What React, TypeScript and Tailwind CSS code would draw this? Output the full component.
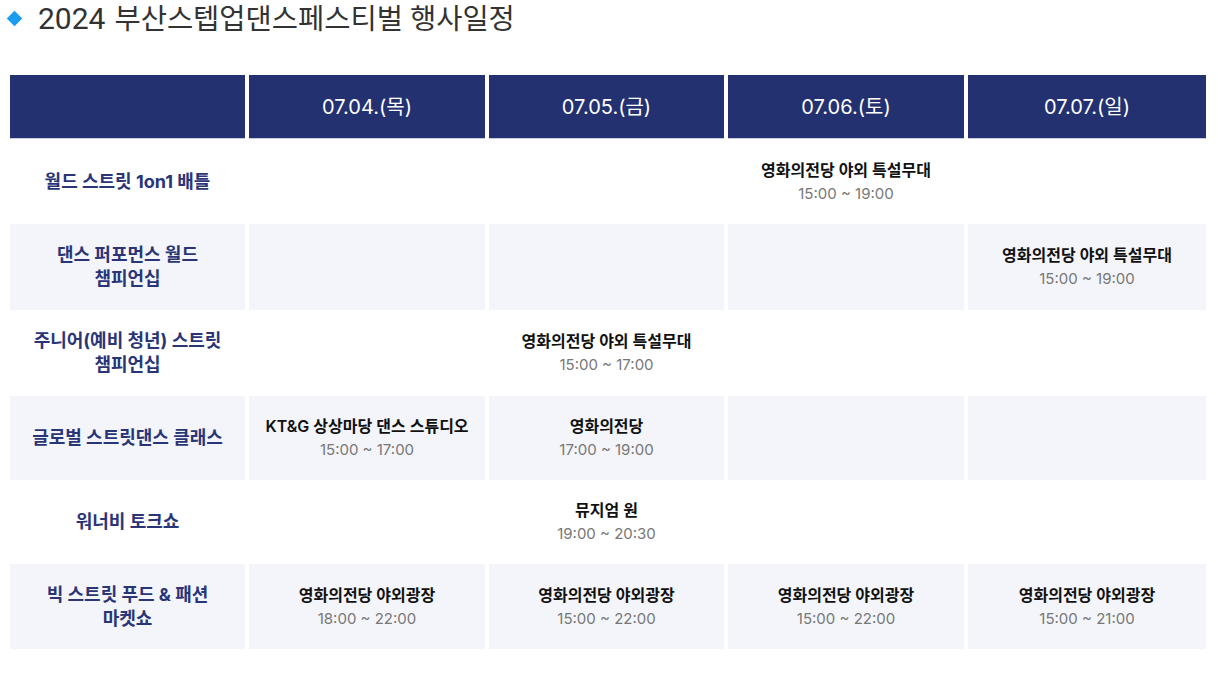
const days = ['07.04.(목)', '07.05.(금)', '07.06.(토)', '07.07.(일)']

type Slot = { place: string; time: string } | null

type Row = {
  label: string[]
  gray: boolean
  h: string
  slots: Slot[]
}

const rows: Row[] = [
  {
    label: ['월드 스트릿 1on1 배틀'],
    gray: false,
    h: 'h-[77px]',
    slots: [null, null, { place: '영화의전당 야외 특설무대', time: '15:00 ~ 19:00' }, null],
  },
  {
    label: ['댄스 퍼포먼스 월드', '챔피언십'],
    gray: true,
    h: 'h-[86px]',
    slots: [null, null, null, { place: '영화의전당 야외 특설무대', time: '15:00 ~ 19:00' }],
  },
  {
    label: ['주니어(예비 청년) 스트릿', '챔피언십'],
    gray: false,
    h: 'h-[78px]',
    slots: [null, { place: '영화의전당 야외 특설무대', time: '15:00 ~ 17:00' }, null, null],
  },
  {
    label: ['글로벌 스트릿댄스 클래스'],
    gray: true,
    h: 'h-[84px]',
    slots: [
      { place: 'KT&G 상상마당 댄스 스튜디오', time: '15:00 ~ 17:00' },
      { place: '영화의전당', time: '17:00 ~ 19:00' },
      null,
      null,
    ],
  },
  {
    label: ['워너비 토크쇼'],
    gray: false,
    h: 'h-[76px]',
    slots: [null, { place: '뮤지엄 원', time: '19:00 ~ 20:30' }, null, null],
  },
  {
    label: ['빅 스트릿 푸드 & 패션', '마켓쇼'],
    gray: true,
    h: 'h-[85px]',
    slots: [
      { place: '영화의전당 야외광장', time: '18:00 ~ 22:00' },
      { place: '영화의전당 야외광장', time: '15:00 ~ 22:00' },
      { place: '영화의전당 야외광장', time: '15:00 ~ 22:00' },
      { place: '영화의전당 야외광장', time: '15:00 ~ 21:00' },
    ],
  },
]

export default function App() {
  return (
    <div className="w-[1218px] h-[673px] bg-white font-['Inter','Noto_Sans_CJK_KR',sans-serif]">
      {/* Title */}
      <div className="flex items-center h-[38px] pl-[9px]">
        <span className="w-[11px] h-[11px] bg-[#1a9cf0] rotate-45 mt-[-1px]" />
        <h1 className="ml-[18px] text-[#333333] font-['Roboto','Noto_Sans_CJK_KR',sans-serif] leading-none whitespace-nowrap">
          <span className="text-[30px]">2024</span>
          <span className="text-[28.5px] ml-[9px]">부산스텝업댄스페스티벌 행사일정</span>
        </h1>
      </div>

      {/* Schedule table */}
      <div className="mt-[37px] ml-[10px] grid grid-cols-[235px_236px_235px_236px_238px] gap-[4px]">
        <div className="h-[64px] bg-[#233170] border-b border-[#c9cde0]" />
        {days.map((d) => (
          <div
            key={d}
            className="h-[64px] bg-[#233170] border-b border-[#c9cde0] flex items-center justify-center text-white text-[20px]"
          >
            {d}
          </div>
        ))}

        {rows.map((r, i) => (
          <div key={i} className="contents">
            <div
              className={`${r.h} ${r.gray ? 'bg-[#f4f5fa]' : 'bg-white'} flex flex-col items-center justify-center text-[18px] leading-[24px] font-bold text-[#2a3577]`}
            >
              {r.label.map((l) => (
                <span key={l}>{l}</span>
              ))}
            </div>
            {r.slots.map((s, j) => (
              <div
                key={j}
                className={`${r.h} ${r.gray ? 'bg-[#f4f5fa]' : 'bg-white'} flex flex-col items-center justify-center leading-[24px]`}
              >
                {s && (
                  <>
                    <span className="text-[16px] font-semibold text-[#111111]">{s.place}</span>
                    <span className="text-[15px] text-[#777777]">{s.time}</span>
                  </>
                )}
              </div>
            ))}
          </div>
        ))}
      </div>
    </div>
  )
}
